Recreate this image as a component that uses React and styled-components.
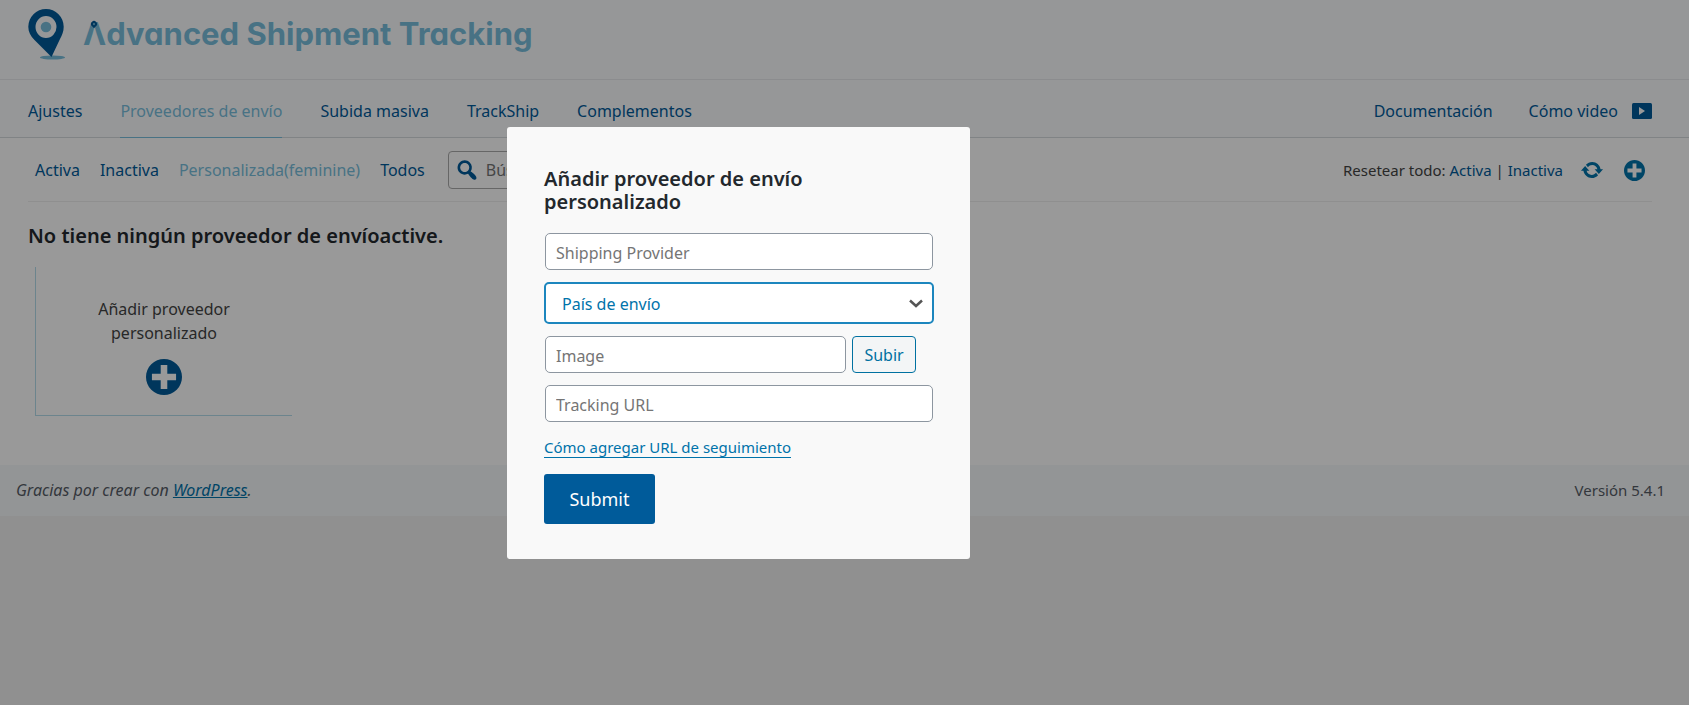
import { useState } from "react";
import styled, { createGlobalStyle } from "styled-components";

const NAV = ["Ajustes", "Proveedores de envío", "Subida masiva", "TrackShip", "Complementos"];
const FILTERS = ["Activa", "Inactiva", "Personalizada(feminine)", "Todos"];

const PlusIcon = ({ size }) => (
  <svg width={size} height={size} viewBox="1.8 1.8 16.4 16.4" fill="currentColor" aria-hidden="true">
    <path d="M15.8 4.2c3.2 3.21 3.2 8.39 0 11.6-3.21 3.2-8.39 3.2-11.6 0C1 12.59 1 7.41 4.2 4.2 7.41 1 12.59 1 15.8 4.2zm-4.3 7.3h4v-3h-4v-4h-3v4h-4v3h4v4h3v-4z" />
  </svg>
);

const UpdateIcon = () => (
  <svg width="24" height="24" viewBox="0 0 20 20" fill="currentColor" aria-hidden="true">
    <path d="M10.2 3.28c3.53 0 6.43 2.61 6.92 6h2.08l-3.5 4-3.5-4h2.32c-.45-1.97-2.21-3.45-4.32-3.45-1.45 0-2.73.71-3.54 1.78L4.95 5.66C6.23 4.2 8.11 3.28 10.2 3.28zm-.4 13.44c-3.52 0-6.43-2.61-6.92-6H.8l3.5-4c1.17 1.33 2.33 2.67 3.5 4H5.48c.45 1.97 2.21 3.45 4.32 3.45 1.45 0 2.73-.71 3.54-1.78l1.71 1.95c-1.28 1.46-3.15 2.38-5.25 2.38z" />
  </svg>
);

const SearchIcon = () => (
  <svg width="26" height="26" viewBox="0 0 20 20" fill="currentColor" aria-hidden="true">
    <path d="M12.14 4.18c1.87 1.87 2.11 4.75.72 6.89.12.1.22.21.36.31.2.16.47.36.81.59.34.24.56.39.66.47.42.31.73.57.94.78.32.32.6.65.84 1 .25.35.44.69.59 1.04.14.35.21.68.18 1-.02.32-.14.59-.36.81s-.49.34-.81.36c-.31.02-.65-.04-.99-.19-.35-.14-.7-.34-1.04-.59-.35-.24-.68-.52-1-.84-.21-.21-.47-.52-.77-.93-.1-.13-.25-.35-.47-.66-.22-.32-.4-.57-.56-.78-.16-.2-.29-.35-.44-.5-2.07 1.09-4.69.76-6.44-.98-2.14-2.15-2.14-5.64 0-7.78 2.15-2.15 5.63-2.15 7.78 0zm-1.41 6.36c1.36-1.37 1.36-3.58 0-4.95-1.37-1.37-3.59-1.37-4.95 0-1.37 1.37-1.37 3.58 0 4.95 1.36 1.37 3.58 1.37 4.95 0z" />
  </svg>
);

const VideoIcon = () => (
  <svg width="20" height="16" viewBox="0 0 20 16" aria-hidden="true">
    <rect width="20" height="16" rx="1.5" fill="#005b9a" />
    <path d="M7 4v8l6-4z" fill="#fff" />
  </svg>
);

const PinLogo = () => (
  <svg width="38" height="51" viewBox="0 0 38 51" aria-hidden="true">
    <ellipse cx="24.5" cy="48.5" rx="12.5" ry="2" fill="#79bfdd" />
    <path
      fill="#005b9a"
      fillRule="evenodd"
      d="M18 0a17.7 17.7 0 0 1 17.7 17.7c0 5-1.7 8.5-3.7 12.3L23.500 48 6.5 31C2.500 27 .3 22.700.3 17.700A17.700 17.700 0 0 1 18 0zm0 7a10.500 11 0 1 0 0 22 10.500 11 0 0 0 0-22z"
    />
    <circle cx="18" cy="18" r="5.3" fill="#79bfdd" />
  </svg>
);

const App = () => {
  const [tab, setTab] = useState(NAV[1]);
  const [filter, setFilter] = useState(FILTERS[2]);
  const [open, setOpen] = useState(true);

  const handleSubmit = (e) => {
    e.preventDefault();
    setOpen(false);
  };

  return (
    <>
      <GlobalStyle />
      <Header>
        <PinLogo />
        <Brand>
          <BrandInitial>
            Λ
            <BrandDot />
          </BrandInitial>
          dvanced Shipment Tracking
        </Brand>
      </Header>
      <Nav>
        <Group $gap={38}>
          {NAV.map((name) => (
            <NavLink key={name} href="#" $active={name === tab} onClick={() => setTab(name)}>
              {name}
            </NavLink>
          ))}
        </Group>
        <Group $gap={36}>
          <NavLink href="#">Documentación</NavLink>
          <NavLink href="#">
            Cómo video
            <VideoIcon />
          </NavLink>
        </Group>
      </Nav>
      <Content>
        <Toolbar>
          <Group $gap={20}>
            {FILTERS.map((name) => (
              <FilterLink key={name} href="#" $active={name === filter} onClick={() => setFilter(name)}>
                {name}
              </FilterLink>
            ))}
            <SearchBox>
              <SearchIcon />
              <SearchInput type="text" aria-label="Búsqueda" placeholder="Búsqueda" />
            </SearchBox>
          </Group>
          <Group $gap={16}>
            <ResetText>
              Resetear todo: <a href="#">Activa</a> | <a href="#">Inactiva</a>
            </ResetText>
            <IconButton type="button" aria-label="Sincronizar proveedores">
              <UpdateIcon />
            </IconButton>
            <IconButton type="button" aria-label="Añadir proveedor" onClick={() => setOpen(true)}>
              <PlusIcon size={21} />
            </IconButton>
          </Group>
        </Toolbar>
        <Heading>No tiene ningún proveedor de envíoactive.</Heading>
        <AddCard type="button" onClick={() => setOpen(true)}>
          <span>
            Añadir proveedor
            <br />
            personalizado
          </span>
          <PlusIcon size={36} />
        </AddCard>
      </Content>
      <Footer>
        <Thanks>
          Gracias por crear con <a href="#">WordPress</a>.
        </Thanks>
        <span>Versión 5.4.1</span>
      </Footer>

      {open && (
        <Overlay>
          <Modal role="dialog" aria-modal="true" aria-labelledby="modal-title" onSubmit={handleSubmit}>
            <ModalTitle id="modal-title">
              Añadir proveedor de envío
              <br />
              personalizado
            </ModalTitle>
            <Fields>
              <Input type="text" aria-label="Shipping Provider" placeholder="Shipping Provider" />
              <SelectWrap>
                <Select aria-label="País de envío">
                  <option>País de envío</option>
                </Select>
                <svg width="14" height="9" viewBox="0 0 14 9" aria-hidden="true">
                  <path d="M1 1.5l6 5.5 6-5.5" fill="none" stroke="#555" strokeWidth="2.5" />
                </svg>
              </SelectWrap>
              <UploadRow>
                <Input type="text" aria-label="Image" placeholder="Image" />
                <UploadButton type="button">Subir</UploadButton>
              </UploadRow>
              <Input type="text" aria-label="Tracking URL" placeholder="Tracking URL" />
            </Fields>
            <HelpLink href="#">Cómo agregar URL de seguimiento</HelpLink>
            <SubmitButton type="submit">Submit</SubmitButton>
          </Modal>
        </Overlay>
      )}
    </>
  );
};

export default App;

const GlobalStyle = createGlobalStyle`
  * {
    box-sizing: border-box;
  }
  body {
    margin: 0;
    background: #f1f1f1;
    color: #444;
    font-family: "Noto Sans", "Open Sans", sans-serif;
    font-size: 16px;
    line-height: 24px;
  }
  input, select, button {
    font: inherit;
  }
  a {
    color: #005b9a;
    text-decoration: none;
  }
  svg {
    display: block;
    flex: none;
  }
`;

const Header = styled.header`
  display: flex;
  gap: 17px;
  padding: 9px 28px 19px;
  background: #fbfcfe;
  border-bottom: 1px solid #e8eaed;
`;

const Brand = styled.div`
  padding-top: 5px;
  color: #79bfdd;
  font-family: Inter, sans-serif;
  font-size: 31px;
  font-weight: 700;
  font-feature-settings: "cv11";
  line-height: 40px;
`;

const BrandInitial = styled.span`
  position: relative;
`;

const BrandDot = styled.span`
  position: absolute;
  top: 6px;
  left: 8px;
  width: 6px;
  height: 6px;
  border: 2px solid #005b9a;
  border-radius: 50% 50% 50% 0;
  transform: rotate(-45deg);
`;

const Nav = styled.nav`
  display: flex;
  justify-content: space-between;
  padding: 0 37px 0 28px;
  background: #fbfcfe;
  border-bottom: 1px solid #d5dade;
`;

const Group = styled.div`
  display: flex;
  align-items: center;
  gap: ${({ $gap }) => $gap}px;
`;

const NavLink = styled.a`
  display: flex;
  align-items: center;
  gap: 14px;
  height: 57px;
  padding-top: 4px;
  color: ${({ $active }) => ($active ? "#79bfdd" : "#005b9a")};
  box-shadow: ${({ $active }) => ($active ? "0 1px 0 #79bfdd" : "none")};
`;

const Content = styled.main`
  padding: 0 37px 49px 28px;
  background: #fff;
`;

const Toolbar = styled.div`
  display: flex;
  justify-content: space-between;
  padding: 13px 5px 12px 7px;
  border-bottom: 1px solid #eee;
`;

const FilterLink = styled.a`
  color: ${({ $active }) => ($active ? "#79bfdd" : "#005b9a")};
`;

const SearchBox = styled.label`
  display: flex;
  align-items: center;
  gap: 4px;
  width: 260px;
  height: 38px;
  margin-left: 3px;
  padding-left: 5px;
  border: 1px solid #aaa;
  border-radius: 4px;
  color: #005b9a;
`;

const SearchInput = styled.input`
  flex: 1;
  min-width: 0;
  border: 0;
  outline: 0;
  background: transparent;
  &::placeholder {
    color: #757575;
  }
`;

const ResetText = styled.span`
  font-size: 15px;
`;

const IconButton = styled.button`
  display: grid;
  place-items: center;
  width: 26px;
  height: 26px;
  padding: 0;
  border: 0;
  background: none;
  color: #0073aa;
  cursor: pointer;
`;

const Heading = styled.h2`
  margin: 20px 0 17px;
  color: #23282d;
  font-size: 20px;
  font-weight: 600;
  line-height: 28px;
`;

const AddCard = styled.button`
  display: flex;
  flex-direction: column;
  align-items: center;
  justify-content: center;
  gap: 14px;
  width: 257px;
  height: 149px;
  margin-left: 7px;
  padding: 10px 0 0;
  border: solid #b5dcec;
  border-width: 0 0 1px 1px;
  background: none;
  color: #444;
  cursor: pointer;
  svg {
    color: #005b9a;
  }
`;

const Footer = styled.footer`
  display: flex;
  justify-content: space-between;
  padding: 14px 24px 14px 16px;
  background: #f5f8fb;
  color: #555d66;
  font-size: 15px;
  line-height: 23px;
  a {
    color: #0073aa;
    text-decoration: underline;
  }
`;

const Thanks = styled.em`
  font-size: 16px;
`;

const Overlay = styled.div`
  position: fixed;
  inset: 0;
  display: flex;
  align-items: flex-start;
  justify-content: center;
  padding: 127px 212px 0 0;
  background: rgba(0, 0, 0, 0.4);
`;

const Modal = styled.form`
  display: flex;
  flex-direction: column;
  align-items: flex-start;
  width: 463px;
  padding: 40px 36px 35px 37px;
  border-radius: 3px;
  background: #f9f9f9;
`;

const ModalTitle = styled.h3`
  margin: 0 0 20px;
  color: #23282d;
  font-size: 20px;
  font-weight: 600;
  line-height: 23px;
`;

const Fields = styled.div`
  display: flex;
  flex-direction: column;
  gap: 12px;
  width: 100%;
`;

const Input = styled.input`
  width: calc(100% - 2px);
  height: 37px;
  margin: 0 1px;
  padding: 3px 10px 0;
  border: 1px solid #8d96a0;
  border-radius: 5px;
  background: #fff;
  color: #32373c;
  &::placeholder {
    color: #757575;
    opacity: 1;
  }
`;

const SelectWrap = styled.div`
  display: grid;
  align-items: center;
  > * {
    grid-area: 1 / 1;
  }
  svg {
    justify-self: end;
    margin-right: 11px;
    pointer-events: none;
  }
`;

const Select = styled.select`
  width: 100%;
  height: 42px;
  padding: 2px 32px 0 16px;
  border: 2px solid #1c86be;
  border-radius: 5px;
  outline: 0;
  appearance: none;
  background: #fff;
  color: #0073aa;
`;

const UploadRow = styled.div`
  display: flex;
  gap: 5px;
  padding-right: 18px;
`;

const UploadButton = styled.button`
  flex: none;
  width: 64px;
  border: 1px solid #0071a1;
  border-radius: 4px;
  background: #f3f5f6;
  color: #0071a1;
  font-size: 16px;
  cursor: pointer;
`;

const HelpLink = styled.a`
  margin: 15px 0 16px;
  border-bottom: 1px solid #0073aa;
  color: #0073aa;
  font-size: 15px;
  line-height: 20px;
`;

const SubmitButton = styled.button`
  width: 111px;
  height: 50px;
  border: 0;
  border-radius: 3px;
  background: #005b9a;
  color: #fff;
  font-size: 18px;
  cursor: pointer;
`;
